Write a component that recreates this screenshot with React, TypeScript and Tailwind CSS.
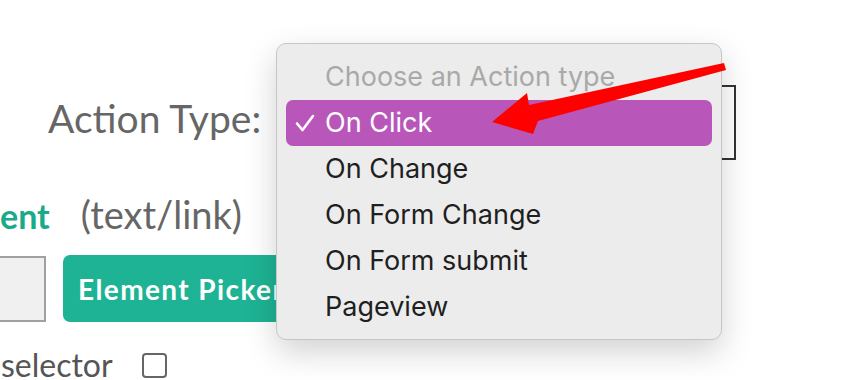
import React from 'react'

const OPTIONS = ['On Click', 'On Change', 'On Form Change', 'On Form submit', 'Pageview']

function Check() {
  return (
    <svg width="20" height="18" viewBox="0 0 20 18" className="ml-[9px] mr-[10px]">
      <path d="M2 9.5 L7.5 16 L18 2" fill="none" stroke="white" strokeWidth="2.6" strokeLinecap="round" strokeLinejoin="round" />
    </svg>
  )
}

function ActionMenu() {
  return (
    <div className="absolute left-[276px] top-[43px] w-[446px] rounded-[10px] border border-[#c6c6c6] bg-[#ececec] px-[9px] pt-[10px] pb-[9px] shadow-[0_12px_32px_rgba(0,0,0,0.18)] font-['Inter',sans-serif] text-[27px]">
      <div className="flex h-[46px] items-center pl-[39px] text-[#a9a9a9]">Choose an Action type</div>
      {OPTIONS.map((opt, i) => {
        const selected = i === 0
        return (
          <div
            key={opt}
            className={
              selected
                ? 'flex h-[46px] items-center rounded-[7px] bg-[#b857b9] text-white'
                : 'flex h-[46px] items-center pl-[39px] text-[#1f1f1f]'
            }
          >
            {selected && <Check />}
            <span>{opt}</span>
          </div>
        )
      })}
    </div>
  )
}

function Arrow() {
  return (
    <svg className="pointer-events-none absolute left-0 top-0" width="852" height="380" viewBox="0 0 852 380">
      <polygon
        points="492,122 527,93 529,105 724,63 726,70 538,121 533,134"
        fill="#ff0000"
      />
    </svg>
  )
}

export default function App() {
  return (
    <div className="relative h-[380px] w-[852px] overflow-hidden bg-white font-['Lato',sans-serif]">
      {/* Action type row */}
      <div className="mt-[85px] flex h-[75px] items-center">
        <span className="mb-[8px] pl-[48px] text-[39px] leading-none text-[#666]">Action Type:</span>
        <div className="ml-[20px] h-[75px] w-[455px] border-2 border-[#333] bg-white" />
      </div>

      {/* Element label */}
      <div className="mt-[35px] flex items-baseline leading-none">
        <span className="text-[34px] font-bold text-[#1aa98a]">ent</span>
        <span className="ml-[31px] text-[38px] text-[#666]">(text/link)</span>
      </div>

      {/* Picker row */}
      <div className="mt-[22px] flex items-center">
        <div className="-ml-[20px] h-[66px] w-[66px] border-2 border-[#a0a0a0] bg-[#f0f0f0]" />
        <button className="ml-[17px] h-[67px] rounded-[7px] bg-[#1eb394] px-[15px] text-[28px] font-bold tracking-[0.05em] text-white">
          Element Picker
        </button>
      </div>

      {/* Selector row */}
      <div className="mt-[28px] flex items-center leading-[30px]">
        <span className="pl-[1px] text-[32px] text-[#555]">selector</span>
        <span className="ml-[29px] h-[25px] w-[25px] rounded-[4px] border-2 border-[#666] bg-white" />
      </div>

      <ActionMenu />
      <Arrow />
    </div>
  )
}
